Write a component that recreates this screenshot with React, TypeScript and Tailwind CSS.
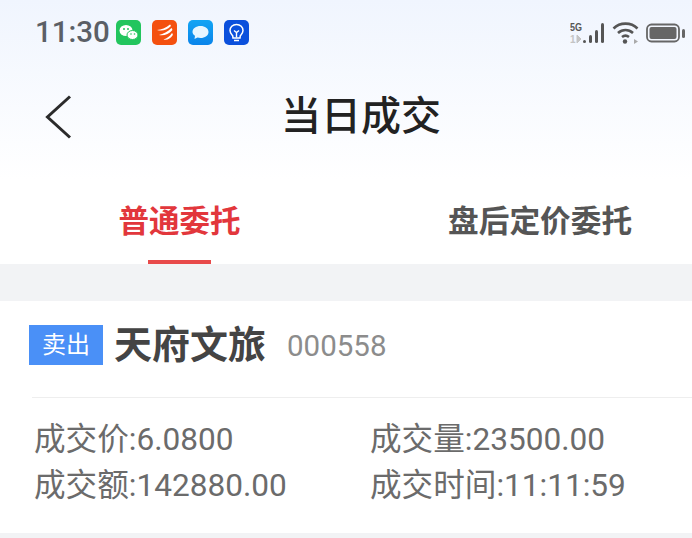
const font = { fontFamily: '"Roboto", "Noto Sans CJK SC", sans-serif' }

const StatusIcons = () => (
  <div className="flex items-center gap-[11px] ml-[6px]">
    <svg width="25" height="25" viewBox="0 0 25 25">
      <rect width="25" height="25" rx="5" fill="#22c55e" />
      <ellipse cx="10" cy="10.5" rx="6.5" ry="5.5" fill="#fff" />
      <ellipse cx="16.5" cy="15" rx="5.5" ry="4.5" fill="#fff" stroke="#22c55e" />
      <circle cx="8" cy="9" r="1" fill="#22c55e" />
      <circle cx="12" cy="9" r="1" fill="#22c55e" />
      <circle cx="15" cy="14" r=".8" fill="#22c55e" />
      <circle cx="18.5" cy="14" r=".8" fill="#22c55e" />
    </svg>
    <svg width="25" height="25" viewBox="0 0 25 25">
      <rect width="25" height="25" rx="5" fill="#f4500f" />
      <path d="M5 10 C9 9.5 14 8 18 4.5 C19 5 19 6 18.5 6.5 C15 10 10 11.5 5 10Z" fill="#fff" />
      <path d="M7 15 C11 14 16 11.5 19.5 8 C20.5 9 20.5 10 20 10.5 C17 14 12 16 7 15Z" fill="#fff" />
      <path d="M11.5 19.5 C15 18.5 18 16 20 13 C21 14 21 15 20.5 15.5 C18.5 18.5 15 20.5 11.5 19.5Z" fill="#fff" />
    </svg>
    <svg width="25" height="25" viewBox="0 0 25 25">
      <defs>
        <linearGradient id="msg" x1="0" y1="0" x2="0" y2="1">
          <stop offset="0" stopColor="#12a5f4" />
          <stop offset="1" stopColor="#0a84ea" />
        </linearGradient>
      </defs>
      <rect width="25" height="25" rx="5" fill="url(#msg)" />
      <path d="M12.5 6 C17 6 20.5 8.5 20.5 12 C20.5 15.5 17 18 12.5 18 C11.5 18 10.5 17.8 9.5 17.5 L6.5 19 L7 15.8 C5.4 14.8 4.5 13.5 4.5 12 C4.5 8.5 8 6 12.5 6Z" fill="#e6f6ff" />
    </svg>
    <svg width="25" height="25" viewBox="0 0 25 25">
      <rect width="25" height="25" rx="5" fill="#0b50dc" />
      <path d="M12.5 4.5 C16.5 4.5 19 7.3 19 10.5 C19 13 17.5 14.3 16.3 15.7 L16 18 H9 L8.7 15.7 C7.5 14.3 6 13 6 10.5 C6 7.3 8.5 4.5 12.5 4.5Z" fill="none" stroke="#fff" strokeWidth="1.5" />
      <path d="M10 10.5 L12.5 12.5 L15 10.5 M12.5 12.5 V17.5 M10 20.5 H15" fill="none" stroke="#fff" strokeWidth="1.4" />
    </svg>
  </div>
)

const SystemIcons = () => (
  <div className="flex items-center gap-[6px]">
    <svg width="36" height="24" viewBox="0 0 36 24">
      <text x="0" y="10" fontSize="11" fontWeight="700" fill="#555" fontFamily="Liberation Sans" textLength="12" lengthAdjust="spacingAndGlyphs">5G</text>
      <text x="0" y="22" fontSize="10" fontWeight="700" fill="#c4c4c4" fontFamily="Liberation Sans">1</text>
      <path d="M7 14 V22 M7 14 L11 18 L7 22" fill="#c4c4c4" stroke="#c4c4c4" strokeWidth="1" />
      <rect x="13" y="19" width="3" height="3" rx="1.5" fill="#555" />
      <rect x="19" y="14" width="3" height="8" rx="1.5" fill="#555" />
      <rect x="25" y="9" width="3" height="13" rx="1.5" fill="#555" />
      <rect x="31" y="2" width="3" height="20" rx="1.5" fill="#555" />
    </svg>
    <svg width="28" height="24" viewBox="0 0 28 24" fill="none" stroke="#555" strokeWidth="2.6">
      <path d="M1.5 7.5 C8 1 19 1 25.5 7.5" />
      <path d="M6 12 C10.5 8 16.5 8 21 12" />
      <path d="M10 16 C12.5 14 14.5 14 17 16" />
      <circle cx="13" cy="20.5" r="2.2" fill="#555" stroke="none" />
      <path d="M22 18 V23 L26 20.5Z" fill="#aaa" stroke="none" />
    </svg>
    <svg width="40" height="20" viewBox="0 0 40 20">
      <rect x="1" y="1.5" width="32" height="17" rx="4.5" fill="none" stroke="#666" strokeWidth="1.8" />
      <rect x="3.5" y="4" width="27" height="12" rx="2" fill="#666" />
      <rect x="36" y="6" width="3" height="9" rx="1.5" fill="#666" />
    </svg>
  </div>
)

const Field = ({ text }: { text: string }) => (
  <div className="text-[#6b6b6b] text-[31.6px] leading-[46px] whitespace-nowrap">{text}</div>
)

export default function App() {
  return (
    <div style={font} className="w-[692px] h-[538px] overflow-hidden bg-[#f2f3f5]">
      <div className="bg-gradient-to-b from-[#f0f5fe] to-white h-[180px]">
        <div className="flex items-center justify-between h-[65px] pl-[35px] pr-[6px]">
          <div className="flex items-center">
            <span className="text-[29.5px] font-medium text-[#5b5f66]">11:30</span>
            <StatusIcons />
          </div>
          <SystemIcons />
        </div>
        <div className="flex items-center h-[104px] pl-[45px]">
          <svg width="27" height="44" viewBox="0 0 27 44" fill="none" stroke="#2b2b2b" strokeWidth="3">
            <path d="M25 1.5 L2.5 22 L25 42.5" />
          </svg>
          <span className="ml-[209px] text-[40px] font-medium text-[#222] leading-[44px]">当日成交</span>
        </div>
      </div>
      <div className="flex bg-white h-[84px]">
        <div className="flex flex-col items-center w-[359px]">
          <span className="mt-[20px] text-[30.5px] font-bold text-[#e2373c] leading-[44px]">普通委托</span>
          <div className="mt-auto w-[63px] h-[4px] bg-[#e84a4a]" />
        </div>
        <div className="flex-1 pl-[89px]">
          <span className="block mt-[20px] text-[30.7px] font-bold text-[#555] leading-[44px] whitespace-nowrap">盘后定价委托</span>
        </div>
      </div>
      <div className="mt-[37px] bg-white h-[232px] pl-[29px]">
        <div className="flex items-center pt-[24px] h-[64px]">
          <span className="w-[74px] h-[40px] flex items-center justify-center bg-[#4a90f7] text-white text-[24px]">卖出</span>
          <span className="ml-[11px] text-[38px] font-bold text-[#444] leading-[40px]">天府文旅</span>
          <span className="ml-[21px] mt-[2px] text-[29.5px] text-[#8c8c8c]">000558</span>
        </div>
        <div className="ml-[3px] mt-[32px] border-t border-[#eeeeee] pt-[19px] grid grid-cols-[336px_1fr] pl-[2px]">
          <Field text="成交价:6.0800" />
          <Field text="成交量:23500.00" />
          <Field text="成交额:142880.00" />
          <Field text="成交时间:11:11:59" />
        </div>
      </div>
    </div>
  )
}
